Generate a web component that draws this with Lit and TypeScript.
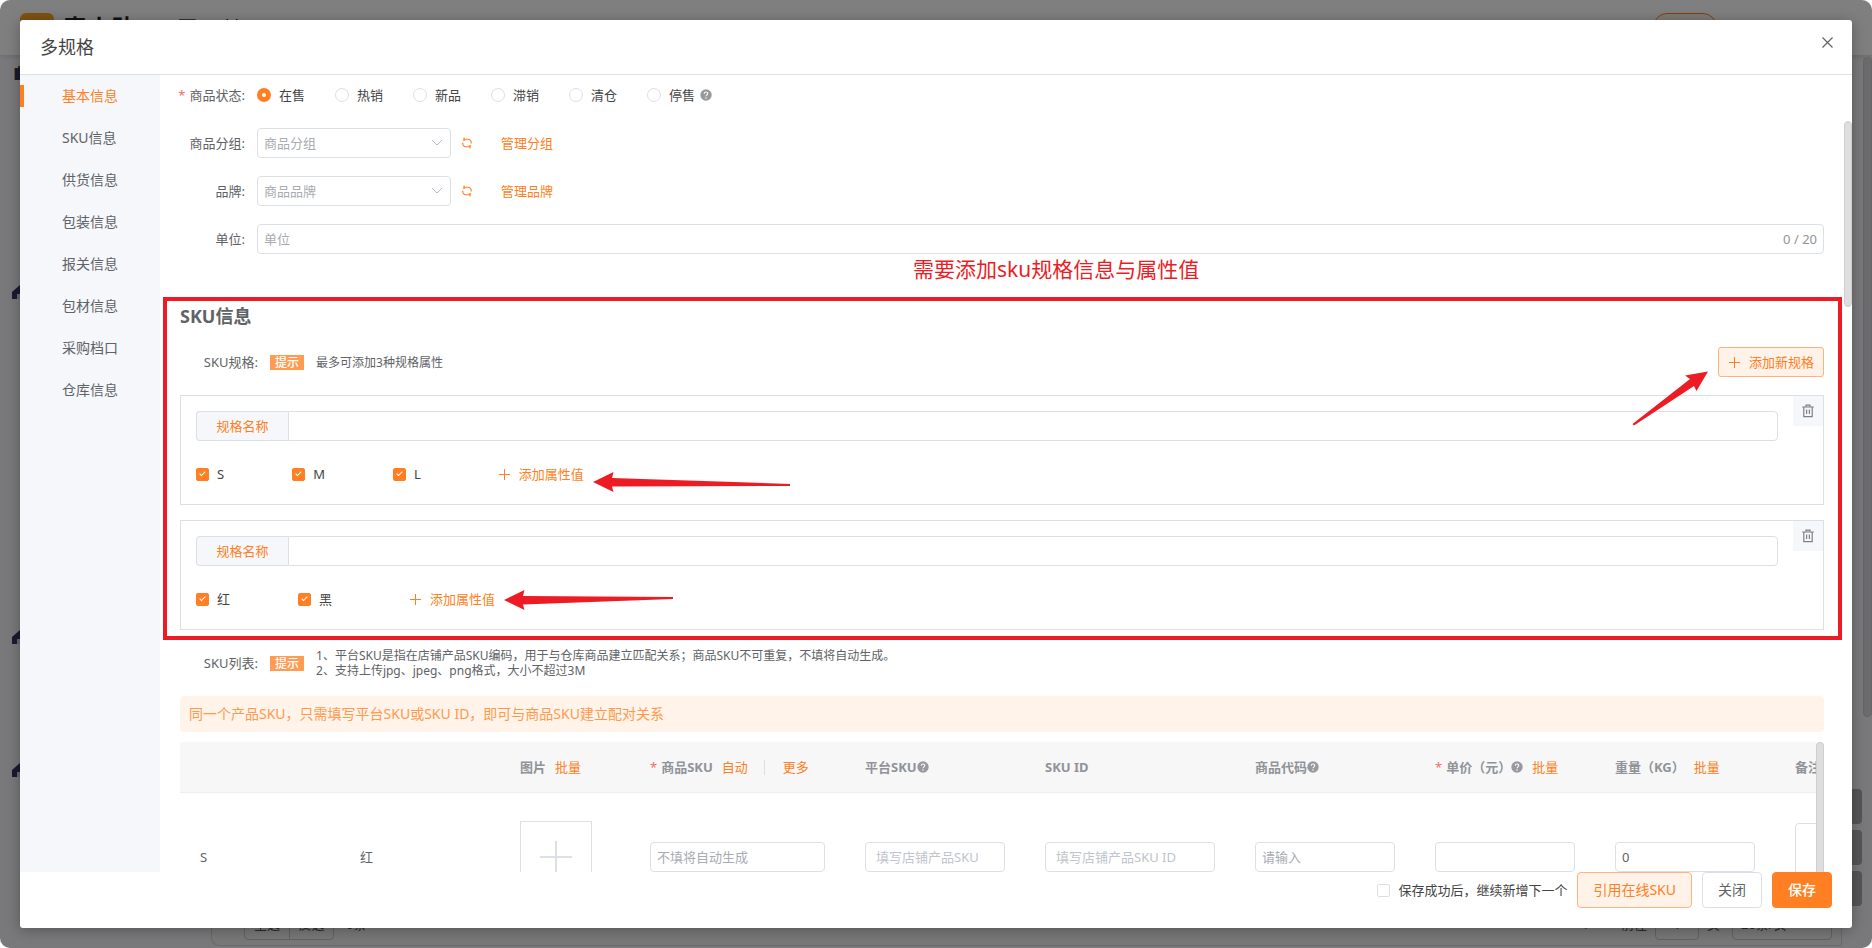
import { LitElement, html, css, svg } from "lit";
import { customElement, property, state } from "lit/decorators.js";
import { classMap } from "lit/directives/class-map.js";

const shared = css`
  *, *::before, *::after { box-sizing: border-box; }
  button, input, select, textarea { font: inherit; color: inherit; margin: 0; outline: none; }
  button { background: none; border: 0; padding: 0; cursor: pointer; white-space: nowrap; }
  a { color: #ff7f22; text-decoration: none; }
  svg { display: block; flex: none; }
  .field {
    height: 30px; border: 1px solid #dcdfe6; border-radius: 4px; background: #fff;
    padding: 0 6px; color: #606266; width: 100%; display: block;
  }
  .field::placeholder { color: #a8abb2; opacity: 1; }
  .check { display: flex; align-items: center; gap: 8px; color: #444; white-space: nowrap; }
  .check input {
    appearance: none; width: 13px; height: 13px; border: 1px solid #dcdfe6; border-radius: 2px;
    background: #fff; position: relative; flex: none;
  }
  .check input:checked { background: #ff7f22; border-color: #ff7f22; }
  .check input:checked::after {
    content: ""; position: absolute; left: 4px; top: 1px; width: 3px; height: 6px;
    border: solid #fff; border-width: 0 1px 1px 0; transform: rotate(45deg);
  }
`;

const plus = html`<svg width="13" height="13" viewBox="0 0 13 13" fill="none" stroke="currentColor"><path d="M6.5 1v11M1 6.5h11" /></svg>`;
const help = html`<svg width="12" height="12" viewBox="0 0 12 12"><circle cx="6" cy="6" r="5.7" fill="#97999f" /><path d="M4.2 4.7C4.3 2.4 7.8 2.4 7.8 4.6 7.8 5.8 6 5.9 6 7.2" fill="none" stroke="#fff" stroke-width="1.1" /><circle cx="6" cy="8.9" r=".75" fill="#fff" /></svg>`;
const refresh = html`<svg width="12" height="12" viewBox="0 0 12 12" fill="none" stroke="#ff7f22" stroke-width="1.1"><path d="M3 2.200H7.200a3 3 0 0 1 3 3V6.400M9 9.800H4.800a3 3 0 0 1-3-3V5.600" /><path d="M1.800 3.200h2.400M3 .6v2.600M10.200 8.800H7.800M9 11.400V8.800" /></svg>`;
const trash = html`<svg width="14" height="14" viewBox="0 0 14 14" fill="none" stroke="#7d8087" stroke-width="1.2"><path d="M1.2 3h11.6M2.8 3v9.6h8.4V3M5 3V1.2h4V3M5.6 5.6v4.4M8.4 5.6v4.4" /></svg>`;
const arrowLeft = (w: number, tail: number) => svg`<svg width=${w} height="20" viewBox="0 0 ${w} 20"><path fill="#ed1c24" d="M0 10 20.500 0 19 6 ${w} ${tail - 1} ${w} ${tail + 1} 19 14.500 20.500 20Z" /></svg>`;

@customElement("page-behind")
class PageBehind extends LitElement {
  static styles = [shared, css`
    :host { display: grid; grid-template-rows: 55px 1fr; height: 100%; background: #f2f3f6; font-size: 13px; line-height: 20px; color: #555; }
    header { background: #fff; box-shadow: 0 1px 6px rgba(0, 0, 0, 0.15); display: flex; align-items: flex-start; padding: 13px 155px 0 20px; }
    .logo { width: 34px; height: 34px; border-radius: 6px; background: #ffa522; }
    .brand { font-size: 24px; line-height: 30px; font-weight: 700; color: #222; margin-left: 9px; }
    .tools { margin: 5px 0 0 44px; }
    .pill { margin-left: auto; width: 64px; height: 28px; border: 1px solid #ff7f22; border-radius: 14px; background: #fff2e8; }
    .body { display: flex; min-height: 0; }
    nav { width: 211px; display: grid; grid-template-rows: 219px 345px 133px 1fr; padding: 11px 0 0 12px; }
    .panel { flex: 1; min-width: 0; display: flex; flex-direction: column; justify-content: flex-end; border: 1px solid #d2d3d8; border-top: 0; border-radius: 0 0 0 8px; margin-bottom: 2px; background: #f0f0f0; }
    .bar { display: flex; align-items: center; padding: 0 9px 5px 32px; gap: 12px; }
    .pair { display: flex; border: 1px solid #c4c6cc; border-radius: 4px; }
    .pair button { width: 44px; height: 30px; }
    .pair button + button { border-left: 1px solid #c4c6cc; }
    .pages { margin-left: auto; display: flex; align-items: center; gap: 8px; }
    .current { color: #ff7f22; margin: 0 12px; }
    .box { border: 1px solid #c4c6cc; border-radius: 4px; height: 32px; width: 44px; text-align: center; background: none; }
    .size { width: 100px; padding: 0 8px; margin-left: 4px; text-align: left; }
    .edge { width: 30px; display: flex; justify-content: space-between; }
    .float { align-self: flex-end; margin-bottom: 42px; display: grid; gap: 6px; width: 20px; }
    .float i { height: 35px; background: #aaa; border-radius: 0 4px 4px 0; }
    .thumb { width: 9px; height: 660px; margin-top: 2px; background: #d6d6d6; border-radius: 4px; border: 1px solid #cacaca; }
  `];
  render() {
    const house = html`<svg width="20" height="14" viewBox="0 0 20 14"><path d="M0 14V7L8 0l8 7v7Z" fill="#33365e" /><path d="M5 14V9h6v5Z" fill="#c9d4ea" /></svg>`;
    return html`
      <header>
        <div class="logo"></div>
        <div class="brand">麦小助</div>
        <svg class="tools" width="70" height="16" viewBox="0 0 70 16" fill="none" stroke="#333" stroke-width="1.500"><path d="M0 2h16v12H0zM48 1l2 4M58 1l-2 4M46 6h14" /></svg>
        <div class="pill"></div>
      </header>
      <div class="body">
        <nav><svg width="20" height="14" viewBox="0 0 20 14"><path d="M3 2h16v12H3z" fill="#33365e" /><path d="M6 0h6v2H6z" fill="#8a3a4a" /><path d="M2 2h1v12H2z" fill="#dba36a" /></svg>${house}${house}${house}</nav>
        <div class="panel">
          <div class="bar">
            <div class="pair"><button>全选</button><button>反选</button></div><span>0条</span>
            <div class="pages"><span>‹</span><b class="current">1</b><span>›</span><span>前往</span><input class="box" aria-label="页码" value="1" /><span>页</span><button class="box size">20条/页</button></div>
          </div>
        </div>
        <div class="edge"><div class="float"><i></i><i></i><i></i></div><div class="thumb"></div></div>
      </div>`;
  }
}

@customElement("spec-card")
class SpecCard extends LitElement {
  @property({ attribute: false }) values: string[] = [];
  @property({ type: Number }) arrow = 0;
  @property({ type: Number }) tail = 0;
  @property({ type: Boolean }) lowered = false;
  static styles = [shared, css`
    :host { display: flex; align-items: flex-start; gap: 15px; border: 1px solid #dcdfe6; height: 110px; }
    .main { flex: 1; min-width: 0; padding: 15px 0 0 15px; }
    .named { display: flex; }
    .named label { flex: none; width: 92px; height: 30px; border: 1px solid #dcdfe6; border-right: 0; border-radius: 4px 0 0 4px; background: #f5f7fb; color: #ff7f22; text-align: center; line-height: 28px; }
    .named .field { border-radius: 0 4px 4px 0; }
    .values { display: flex; align-items: center; gap: 68px; height: 20px; margin-top: 23px; }
    .add { position: relative; display: flex; align-items: center; gap: 8px; padding: 0 9px; color: #ff7f22; }
    .point { position: absolute; left: 100%; top: 1px; }
    .point.low { top: 8px; }
    .del { width: 30px; height: 30px; background: #f5f7fb; display: grid; place-items: center; }
  `];
  render() {
    return html`
      <div class="main">
        <div class="named"><label for="name">规格名称</label><input id="name" class="field" /></div>
        <div class="values">
          ${this.values.map((v) => html`<label class="check"><input type="checkbox" checked />${v}</label>`)}
          <button class="add">${plus}添加属性值<span class=${classMap({ point: true, low: this.lowered })}>${arrowLeft(this.arrow, this.tail)}</span></button>
        </div>
      </div>
      <button class="del" aria-label="删除">${trash}</button>`;
  }
}

@customElement("sku-table")
class SkuTable extends LitElement {
  static styles = [shared, css`
    :host { display: flex; height: 220px; }
    .clip { flex: 1; min-width: 0; overflow: hidden; }
    .thumb { flex: none; width: 8px; background: #dedede; border: 1px solid #cfcfcf; border-width: 1px 1px 0; border-radius: 4px 4px 0 0; }
    table { border-collapse: separate; border-spacing: 0; table-layout: fixed; width: 1850px; }
    th { height: 51px; padding: 0 20px; background: #f7f7f8; border-bottom: 1px solid #ebeef5; color: #909399; font-weight: 700; text-align: left; white-space: nowrap; }
    th div { display: flex; align-items: center; }
    th a { font-weight: 400; margin-left: 9px; }
    td { height: 128px; padding: 0 20px; color: #606266; }
    .req { color: #f56c6c; font-weight: 400; margin-right: 4px; }
    .sep { width: 1px; height: 15px; background: #dcdfe6; margin: 0 9px 0 16px; }
    .pic { width: 72px; height: 72px; border: 1px solid #dcdfe6; display: grid; place-items: center; }
    .soft { padding: 0 10px; }
    .soft::placeholder { color: #c0c4cc; }
    textarea.field { height: 68px; width: 200px; resize: none; }
  `];
  render() {
    const widths = [160, 160, 130, 215, 180, 210, 180, 180, 180, 255];
    return html`
      <div class="clip">
        <table>
          <colgroup>${widths.map((w) => html`<col style="width:${w}px" />`)}</colgroup>
          <thead><tr>
            <th></th><th></th>
            <th><div>图片<a href="#">批量</a></div></th>
            <th><div><span class="req">*</span>商品SKU<a href="#">自动</a><span class="sep"></span><a href="#">更多</a></div></th>
            <th><div>平台SKU${help}</div></th>
            <th>SKU ID</th>
            <th><div>商品代码${help}</div></th>
            <th><div><span class="req">*</span>单价（元）${help}<a href="#">批量</a></div></th>
            <th><div>重量（KG）<a href="#">批量</a></div></th>
            <th>备注</th>
          </tr></thead>
          <tbody><tr>
            <td>S</td><td>红</td>
            <td><button class="pic" aria-label="上传图片"><svg width="32" height="32" viewBox="0 0 32 32" stroke="#dcdfe6" stroke-width="2"><path d="M16 0v32M0 16h32" /></svg></button></td>
            <td><input class="field" aria-label="商品SKU" placeholder="不填将自动生成" /></td>
            <td><input class="field soft" aria-label="平台SKU" placeholder="填写店铺产品SKU" /></td>
            <td><input class="field soft" aria-label="SKU ID" placeholder="填写店铺产品SKU ID" /></td>
            <td><input class="field" aria-label="商品代码" placeholder="请输入" /></td>
            <td><input class="field" aria-label="单价" /></td>
            <td><input class="field" aria-label="重量" value="0" /></td>
            <td><textarea class="field" aria-label="备注"></textarea></td>
          </tr></tbody>
        </table>
      </div>
      <div class="thumb"></div>`;
  }
}

@customElement("app-root")
class AppRoot extends LitElement {
  @state() private status = "在售";
  @state() private tab = "基本信息";
  static styles = [shared, css`
    :host {
      display: block; position: relative; height: 100vh; overflow: hidden; border-radius: 10px;
      font-family: "Noto Sans", "Noto Sans CJK SC", sans-serif; font-size: 13px; line-height: 20px; color: #606266;
    }
    .mask { position: absolute; inset: 0; background: rgba(0, 0, 0, 0.5); padding: 20px; display: flex; }
    .dialog { flex: 1; min-width: 0; background: #fff; border-radius: 3px; display: grid; grid-template: 55px minmax(0, 1fr) 56px / minmax(0, 1fr); box-shadow: 0 2px 14px rgba(0, 0, 0, 0.3); }
    .head { display: flex; align-items: center; justify-content: space-between; padding: 0 18px 0 20px; border-bottom: 1px solid #dcdfe6; }
    h1 { font-size: 18px; line-height: 24px; font-weight: 400; color: #444; margin: 0; }
    .close { width: 13px; height: 13px; margin-bottom: 10px; }
    .body { display: flex; min-height: 0; }
    nav { flex: none; width: 140px; background: #f5f7fb; font-size: 14px; }
    nav a { display: flex; align-items: center; height: 42px; color: #606266; padding-left: 42px; position: relative; }
    nav a.on { color: #ff7f22; }
    nav a.on::before { content: ""; position: absolute; left: 0; top: 10px; width: 4px; height: 22px; background: #ff7f22; }
    main { flex: 1; min-width: 0; overflow: hidden; padding: 5px 20px 0; }
    .rail { flex: none; width: 8px; }
    .rail div { height: 186px; margin-top: 46px; border-radius: 4px; background: #dedede; border: 1px solid #cfcfcf; }
    .row { display: flex; align-items: center; height: 30px; margin-bottom: 18px; }
    .label { flex: none; width: 77px; padding-right: 12px; text-align: right; white-space: nowrap; display: flex; justify-content: flex-end; }
    .req { color: #f56c6c; margin-right: 4px; }
    .radio { display: flex; align-items: center; gap: 8px; margin-right: 30px; color: #444; }
    .radio:last-of-type { margin-right: 5px; }
    .radio input { appearance: none; width: 14px; height: 14px; border: 1px solid #dcdfe6; border-radius: 50%; background: #fff; }
    .radio input:checked { border: 5px solid #ff7f22; }
    .pick { position: relative; width: 194px; }
    .pick select { appearance: none; color: #a8abb2; }
    .pick svg { position: absolute; right: 8px; top: 10px; pointer-events: none; }
    .again { margin: 0 28px 0 10px; }
    .count { position: relative; flex: 1; }
    .count span { position: absolute; right: 7px; top: 5px; color: #909399; }
    section { position: relative; margin-top: 51px; }
    .frame { position: absolute; inset: -8px -18px -10px -17px; border: 4px solid #ed1c24; pointer-events: none; }
    .note { position: absolute; left: 733px; top: -50px; font-size: 21px; line-height: 28px; color: #ed1c24; white-space: nowrap; }
    h2 { font-size: 18px; line-height: 22px; margin: 0 0 20px; color: #606266; }
    .wide { flex: none; width: 78px; text-align: right; }
    .hint { background: #ff9b52; color: #fff; font-size: 12px; line-height: 15px; padding: 0 5px; font-weight: 500; }
    .tip { display: flex; align-items: center; gap: 12px; }
    .small { font-size: 12px; line-height: 15px; }
    .new { position: relative; margin-left: auto; display: flex; align-items: center; gap: 8px; height: 30px; padding: 0 9px; color: #ff7f22; background: #fff2e8; border: 1px solid #ffb27a; border-radius: 3px; }
    .slant { position: absolute; right: 114px; top: 23px; }
    .cards { display: grid; gap: 15px; margin-top: 18px; }
    .list { margin: 18px 0; }
    .alert { background: #fff3ea; color: #ff9a4c; border-radius: 4px; font-size: 14px; line-height: 36px; padding: 0 9px; margin-bottom: 10px; }
    footer { display: flex; align-items: flex-start; justify-content: flex-end; gap: 10px; padding-right: 20px; }
    footer .check { height: 36px; }
    footer button { height: 36px; padding: 0 15px; border: 1px solid #dcdfe6; border-radius: 4px; font-size: 14px; background: #fff; }
    footer .tint { color: #ff7f22; background: #fff2e8; border-color: #ffb27a; }
    footer .main { color: #fff; background: #ff7f22; border-color: #ff7f22; font-weight: 500; }
  `];
  private picker(label: string, id: string, hint: string, link: string) {
    return html`<div class="row">
      <label class="label" for=${id}>${label}:</label>
      <div class="pick"><select id=${id} class="field"><option>${hint}</option></select>
        <svg width="12" height="10" viewBox="0 0 12 10" fill="none" stroke="#b4b8c0"><path d="m1 2 5 5 5-5" /></svg></div>
      <button class="again" aria-label="刷新">${refresh}</button><a href="#">${link}</a>
    </div>`;
  }
  render() {
    const tabs = ["基本信息", "SKU信息", "供货信息", "包装信息", "报关信息", "包材信息", "采购档口", "仓库信息"];
    const states = ["在售", "热销", "新品", "滞销", "清仓", "停售"];
    return html`
      <page-behind></page-behind>
      <div class="mask">
        <div class="dialog" role="dialog" aria-labelledby="title">
          <div class="head">
            <h1 id="title">多规格</h1>
            <button class="close" aria-label="关闭"><svg width="13" height="13" viewBox="0 0 13 13" stroke="#606266" stroke-width="1.200"><path d="m1.500 1.500 10 10M11.500 1.500l-10 10" /></svg></button>
          </div>
          <div class="body">
            <nav>${tabs.map((t) => html`<a href="#" class=${classMap({ on: t === this.tab })} @click=${() => (this.tab = t)}>${t}</a>`)}</nav>
            <main>
              <div class="row" role="radiogroup" aria-labelledby="st">
                <span class="label" id="st"><span class="req">*</span>商品状态:</span>
                ${states.map((s) => html`<label class="radio"><input type="radio" name="status" .checked=${s === this.status} @change=${() => (this.status = s)} />${s}</label>`)}
                ${help}
              </div>
              ${this.picker("商品分组", "group", "商品分组", "管理分组")}
              ${this.picker("品牌", "brand", "商品品牌", "管理品牌")}
              <div class="row">
                <label class="label" for="unit">单位:</label>
                <div class="count"><input id="unit" class="field" placeholder="单位" /><span>0 / 20</span></div>
              </div>
              <section>
                <div class="frame"></div>
                <div class="note">需要添加sku规格信息与属性值</div>
                <h2>SKU信息</h2>
                <div class="tip">
                  <span class="wide">SKU规格:</span><span class="hint">提示</span><span class="small">最多可添加3种规格属性</span>
                  <button class="new">${plus}添加新规格
                    <svg class="slant" width="78" height="55" viewBox="0 0 78 55"><path fill="#ed1c24" d="M77 .500 54 4.500l5 3.500L1.500 53 3 54.500 63 15l2.500 5Z" /></svg>
                  </button>
                </div>
                <div class="cards">
                  <spec-card .values=${["S", "M", "L"]} arrow="197" tail="13" lowered></spec-card>
                  <spec-card .values=${["红", "黑"]} arrow="169" tail="8"></spec-card>
                </div>
              </section>
              <div class="tip list">
                <span class="wide">SKU列表:</span><span class="hint">提示</span>
                <div class="small">1、平台SKU是指在店铺产品SKU编码，用于与仓库商品建立匹配关系；商品SKU不可重复，不填将自动生成。<br />2、支持上传jpg、jpeg、png格式，大小不超过3M</div>
              </div>
              <div class="alert">同一个产品SKU，只需填写平台SKU或SKU ID，即可与商品SKU建立配对关系</div>
              <sku-table></sku-table>
            </main>
            <div class="rail"><div></div></div>
          </div>
          <footer>
            <label class="check"><input type="checkbox" />保存成功后，继续新增下一个</label>
            <button class="tint">引用在线SKU</button><button>关闭</button><button class="main">保存</button>
          </footer>
        </div>
      </div>`;
  }
}
